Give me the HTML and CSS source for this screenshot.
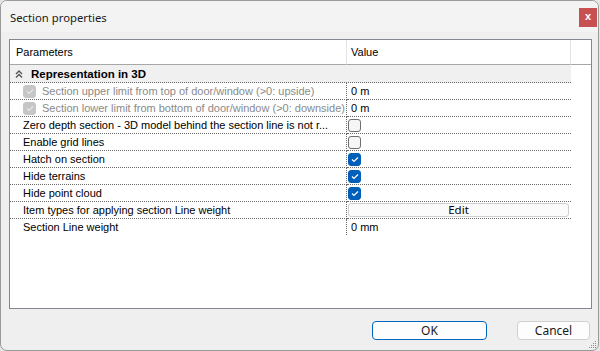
FILE: index.html
```html
<!DOCTYPE html>
<html>
<head>
<meta charset="UTF-8">
<title>Section properties</title>
<link rel="stylesheet" href="styles.css">
</head>
<body>

<div class="window">
  <div class="titlebar">
    <span class="title">Section properties</span>
    <span class="close">x</span>
  </div>

  <div class="panel">
    <div class="grid">
      <div class="head name">Parameters</div>
      <div class="head value">Value</div>
      <div class="head rest"></div>

      <div class="cat">
        <svg class="chev" width="8" height="8" viewBox="0 0 8 8"><polyline points="1,4 4,1 7,4" /><polyline points="1,7.5 4,4.5 7,7.5" /></svg>
        <span>Representation in 3D</span>
      </div>
      <div class="rest"></div>

      <div class="row name off"><span class="box dis"><svg width="8" height="7" viewBox="0 0 8 7"><polyline points="1,3.5 3,5.5 7,1.5" /></svg></span>Section upper limit from top of door/window (&gt;0: upside)</div>
      <div class="row value">0 m</div>
      <div class="rest"></div>

      <div class="row name off"><span class="box dis"><svg width="8" height="7" viewBox="0 0 8 7"><polyline points="1,3.5 3,5.5 7,1.5" /></svg></span>Section lower limit from bottom of door/window (&gt;0: downside)</div>
      <div class="row value">0 m</div>
      <div class="rest"></div>

      <div class="row name">Zero depth section - 3D model behind the section line is not r...</div>
      <div class="row value chk"><span class="box"></span></div>
      <div class="rest"></div>

      <div class="row name">Enable grid lines</div>
      <div class="row value chk"><span class="box"></span></div>
      <div class="rest"></div>

      <div class="row name">Hatch on section</div>
      <div class="row value chk"><span class="box on"><svg width="8" height="7" viewBox="0 0 8 7"><polyline points="1,3.5 3,5.5 7,1.5" /></svg></span></div>
      <div class="rest"></div>

      <div class="row name">Hide terrains</div>
      <div class="row value chk"><span class="box on"><svg width="8" height="7" viewBox="0 0 8 7"><polyline points="1,3.5 3,5.5 7,1.5" /></svg></span></div>
      <div class="rest"></div>

      <div class="row name">Hide point cloud</div>
      <div class="row value chk"><span class="box on"><svg width="8" height="7" viewBox="0 0 8 7"><polyline points="1,3.5 3,5.5 7,1.5" /></svg></span></div>
      <div class="rest"></div>

      <div class="row name">Item types for applying section Line weight</div>
      <div class="row value chk"><span class="edit">Edit</span></div>
      <div class="rest"></div>

      <div class="row name last">Section Line weight</div>
      <div class="row value last">0 mm</div>
      <div class="rest"></div>
    </div>
  </div>

  <div class="footer">
    <button class="btn ok">OK</button>
    <button class="btn">Cancel</button>
  </div>

  <svg class="grip" width="8" height="8" viewBox="0 0 8 8">
    <rect x="6" y="0" width="1" height="1" /><rect x="4" y="2" width="1" height="1" /><rect x="6" y="2" width="1" height="1" />
    <rect x="2" y="4" width="1" height="1" /><rect x="4" y="4" width="1" height="1" /><rect x="6" y="4" width="1" height="1" />
    <rect x="0" y="6" width="1" height="1" /><rect x="2" y="6" width="1" height="1" /><rect x="4" y="6" width="1" height="1" /><rect x="6" y="6" width="1" height="1" />
  </svg>
</div>

</body>
</html>
```

FILE: styles.css
```css
/* page behind the dialog */
body {
  margin: 0;
  background-color: #e6e6e6;
  font-family: "Liberation Sans", Arial, sans-serif;
}

/* the dialog window */
.window {
  position: relative;
  width: 597px;
  height: 349px;
  border: 1px solid #9a9a9a;
  border-radius: 7px;
  background-color: #efefef;
  display: flex;
  flex-direction: column;
  overflow: hidden;
}

.titlebar {
  height: 31px;
  background-color: #f3f3f3;
  display: flex;
  align-items: center;
  justify-content: space-between;
  padding-left: 9px;
  padding-right: 1px;
}

.title {
  font-family: "Noto Sans", sans-serif;
  font-size: 11.3px;
  color: #1a1a1a;
  margin-top: 1px;
}

.close {
  width: 18px;
  height: 19px;
  margin-top: 2px;
  background-color: #c75050;
  color: #ffffff;
  font-weight: bold;
  font-size: 11px;
  line-height: 17px;
  text-align: center;
}

/* the property grid */
.panel {
  margin: 7px 6px 0 8px;
  height: 268px;
  border: 1px solid #828790;
  background-color: #ffffff;
}

.grid {
  display: grid;
  grid-template-columns: 337px 224px 20px;
  font-size: 11px;
  color: #000000;
}

.head {
  height: 24px;
  line-height: 25px;
  border-bottom: 1px solid #a7a7a7;
}

.head.name {
  padding-left: 6px;
  border-right: 1px solid #e3e3e3;
}

.head.value {
  padding-left: 4px;
  border-right: 1px solid #e3e3e3;
}

.cat {
  grid-column: 1 / 3;
  height: 17px;
  background-color: #f0f0f0;
  border-bottom: 1px dotted #6a6a6a;
  display: flex;
  align-items: center;
  font-weight: bold;
  font-size: 11.5px;
}

.chev {
  margin-left: 5px;
  margin-right: 8px;
}

.chev polyline {
  fill: none;
  stroke: #555555;
  stroke-width: 1.4;
}

.row {
  height: 16px;
  line-height: 16px;
  border-bottom: 1px dotted #6a6a6a;
  white-space: nowrap;
  overflow: hidden;
}

.row.last {
  border-bottom: none;
}

.row.name {
  padding-left: 13px;
  border-right: 1px dotted #6a6a6a;
  display: flex;
  align-items: center;
}

.row.off {
  color: #8a8a8a;
  padding-left: 13px;
}

.row.value {
  padding-left: 4px;
  display: flex;
  align-items: center;
}

.row.chk {
  padding-left: 1px;
}

.box {
  width: 11px;
  height: 11px;
  border: 1px solid #6f6f6f;
  border-radius: 3px;
  background-color: #f6f6f6;
  display: flex;
  align-items: center;
  justify-content: center;
}

.box svg polyline {
  fill: none;
  stroke: #ffffff;
  stroke-width: 1.2;
}

.box.on {
  background-color: #005fb8;
  border-color: #005fb8;
}

.box.dis {
  width: 11px;
  height: 11px;
  margin-right: 6px;
  background-color: #c6c6c6;
  border-color: #c6c6c6;
}

.box.dis svg polyline {
  stroke: #e8e8e8;
}

.edit {
  width: 219px;
  height: 12px;
  margin-right: 2px;
  border: 1px solid #cfcfcf;
  border-radius: 3px;
  background-color: #fbfbfb;
  text-align: center;
  line-height: 12px;
  font-family: "Noto Sans", sans-serif;
  font-size: 11.5px;
}

/* dialog buttons */
.footer {
  display: flex;
  justify-content: flex-end;
  gap: 30px;
  padding: 12px 8px 0 0;
}

.btn {
  height: 19px;
  width: 73px;
  padding: 0;
  border: 1px solid #d0d0d0;
  border-radius: 4px;
  background-color: #fdfdfd;
  font-family: "Noto Sans", sans-serif;
  font-size: 12px;
  line-height: 16px;
  color: #1a1a1a;
}

.btn.ok {
  width: 115px;
  border-color: #0067c0;
}

.grip {
  position: absolute;
  right: 1px;
  bottom: 1px;
}

.grip rect {
  fill: #8a8a8a;
}
```
